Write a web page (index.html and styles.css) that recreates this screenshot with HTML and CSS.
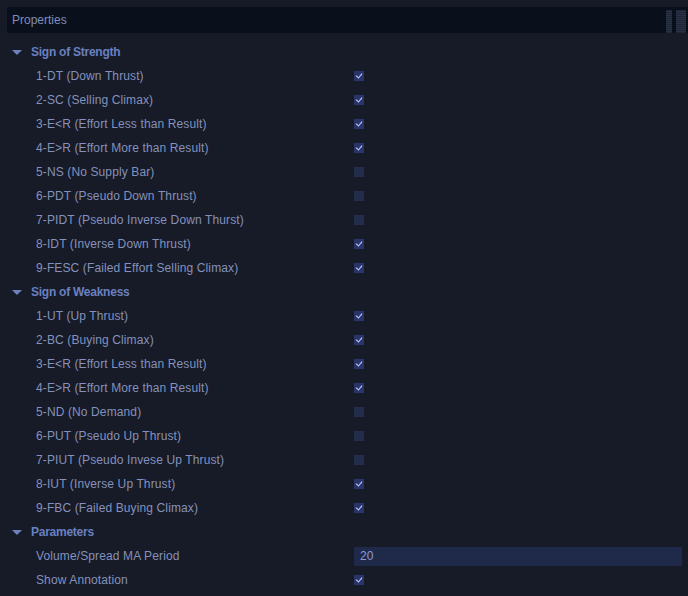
FILE: index.html
```html
<!DOCTYPE html>
<html>
<head>
<meta charset="utf-8">
<link rel="stylesheet" href="styles.css">
</head>
<body>
<div class="panel">
  <div class="header">
    <span class="title">Properties</span>
    <span class="grips"><i></i><i></i></span>
  </div>
  <div class="list">
    <div class="section"><span class="tri"></span><span>Sign of Strength</span></div>
    <div class="row"><span class="label">1-DT (Down Thrust)</span><span class="cb on"></span></div>
    <div class="row"><span class="label">2-SC (Selling Climax)</span><span class="cb on"></span></div>
    <div class="row"><span class="label">3-E&lt;R (Effort Less than Result)</span><span class="cb on"></span></div>
    <div class="row"><span class="label">4-E&gt;R (Effort More than Result)</span><span class="cb on"></span></div>
    <div class="row"><span class="label">5-NS (No Supply Bar)</span><span class="cb"></span></div>
    <div class="row"><span class="label">6-PDT (Pseudo Down Thrust)</span><span class="cb"></span></div>
    <div class="row"><span class="label">7-PIDT (Pseudo Inverse Down Thurst)</span><span class="cb"></span></div>
    <div class="row"><span class="label">8-IDT (Inverse Down Thrust)</span><span class="cb on"></span></div>
    <div class="row"><span class="label">9-FESC (Failed Effort Selling Climax)</span><span class="cb on"></span></div>
    <div class="section"><span class="tri"></span><span>Sign of Weakness</span></div>
    <div class="row"><span class="label">1-UT (Up Thrust)</span><span class="cb on"></span></div>
    <div class="row"><span class="label">2-BC (Buying Climax)</span><span class="cb on"></span></div>
    <div class="row"><span class="label">3-E&lt;R (Effort Less than Result)</span><span class="cb on"></span></div>
    <div class="row"><span class="label">4-E&gt;R (Effort More than Result)</span><span class="cb on"></span></div>
    <div class="row"><span class="label">5-ND (No Demand)</span><span class="cb"></span></div>
    <div class="row"><span class="label">6-PUT (Pseudo Up Thrust)</span><span class="cb"></span></div>
    <div class="row"><span class="label">7-PIUT (Pseudo Invese Up Thrust)</span><span class="cb"></span></div>
    <div class="row"><span class="label">8-IUT (Inverse Up Thrust)</span><span class="cb on"></span></div>
    <div class="row"><span class="label">9-FBC (Failed Buying Climax)</span><span class="cb on"></span></div>
    <div class="section"><span class="tri"></span><span>Parameters</span></div>
    <div class="row"><span class="label">Volume/Spread MA Period</span><span class="input">20</span></div>
    <div class="row"><span class="label">Show Annotation</span><span class="cb on"></span></div>
  </div>
</div>
</body>
</html>
```
FILE: styles.css
```css
html, body {
  margin: 0;
  padding: 0;
  background: #161b27;
}
body {
  width: 688px;
  height: 596px;
  overflow: hidden;
  font-family: "Liberation Sans", Arial, sans-serif;
  font-size: 12px;
}
.panel {
  padding-top: 7px;
}
.header {
  margin-left: 7px;
  height: 26px;
  background: #0a101b;
  display: flex;
  align-items: center;
  justify-content: space-between;
}
.title {
  color: #7e8dbb;
  padding-left: 5px;
}
.grips {
  display: flex;
  gap: 4px;
  align-self: stretch;
  padding: 3px 2px 0 0;
}
.grips i {
  display: block;
  width: 6px;
  background: repeating-linear-gradient(#1e2536 0 1px, #2a3245 1px 2px);
}
.grips i + i {
  width: 10px;
}
.list {
  margin-top: 7px;
}
.section, .row {
  height: 24px;
  display: flex;
  align-items: center;
}
.section {
  padding-left: 12px;
  color: #6a80c0;
  font-weight: bold;
  letter-spacing: -0.25px;
}
.tri {
  width: 0;
  height: 0;
  border-left: 5px solid transparent;
  border-right: 5px solid transparent;
  border-top: 5px solid #6d80c0;
  margin-right: 9px;
}
.row {
  padding-left: 36px;
}
.label {
  width: 318px;
  color: #8591bc;
  letter-spacing: 0.12px;
}
.cb {
  width: 10px;
  height: 10px;
  background: #242c4c;
  position: relative;
}
.cb.on {
  background: #29356a;
}
.cb.on::after {
  content: "";
  position: absolute;
  left: 3px;
  top: 1px;
  width: 3px;
  height: 5px;
  border: solid #c8d2ff;
  border-width: 0 1.5px 1.5px 0;
  transform: rotate(40deg);
}
.input {
  width: 322px;
  height: 19px;
  line-height: 19px;
  padding-left: 6px;
  background: #1f294a;
  color: #8c9bd2;
}
```
